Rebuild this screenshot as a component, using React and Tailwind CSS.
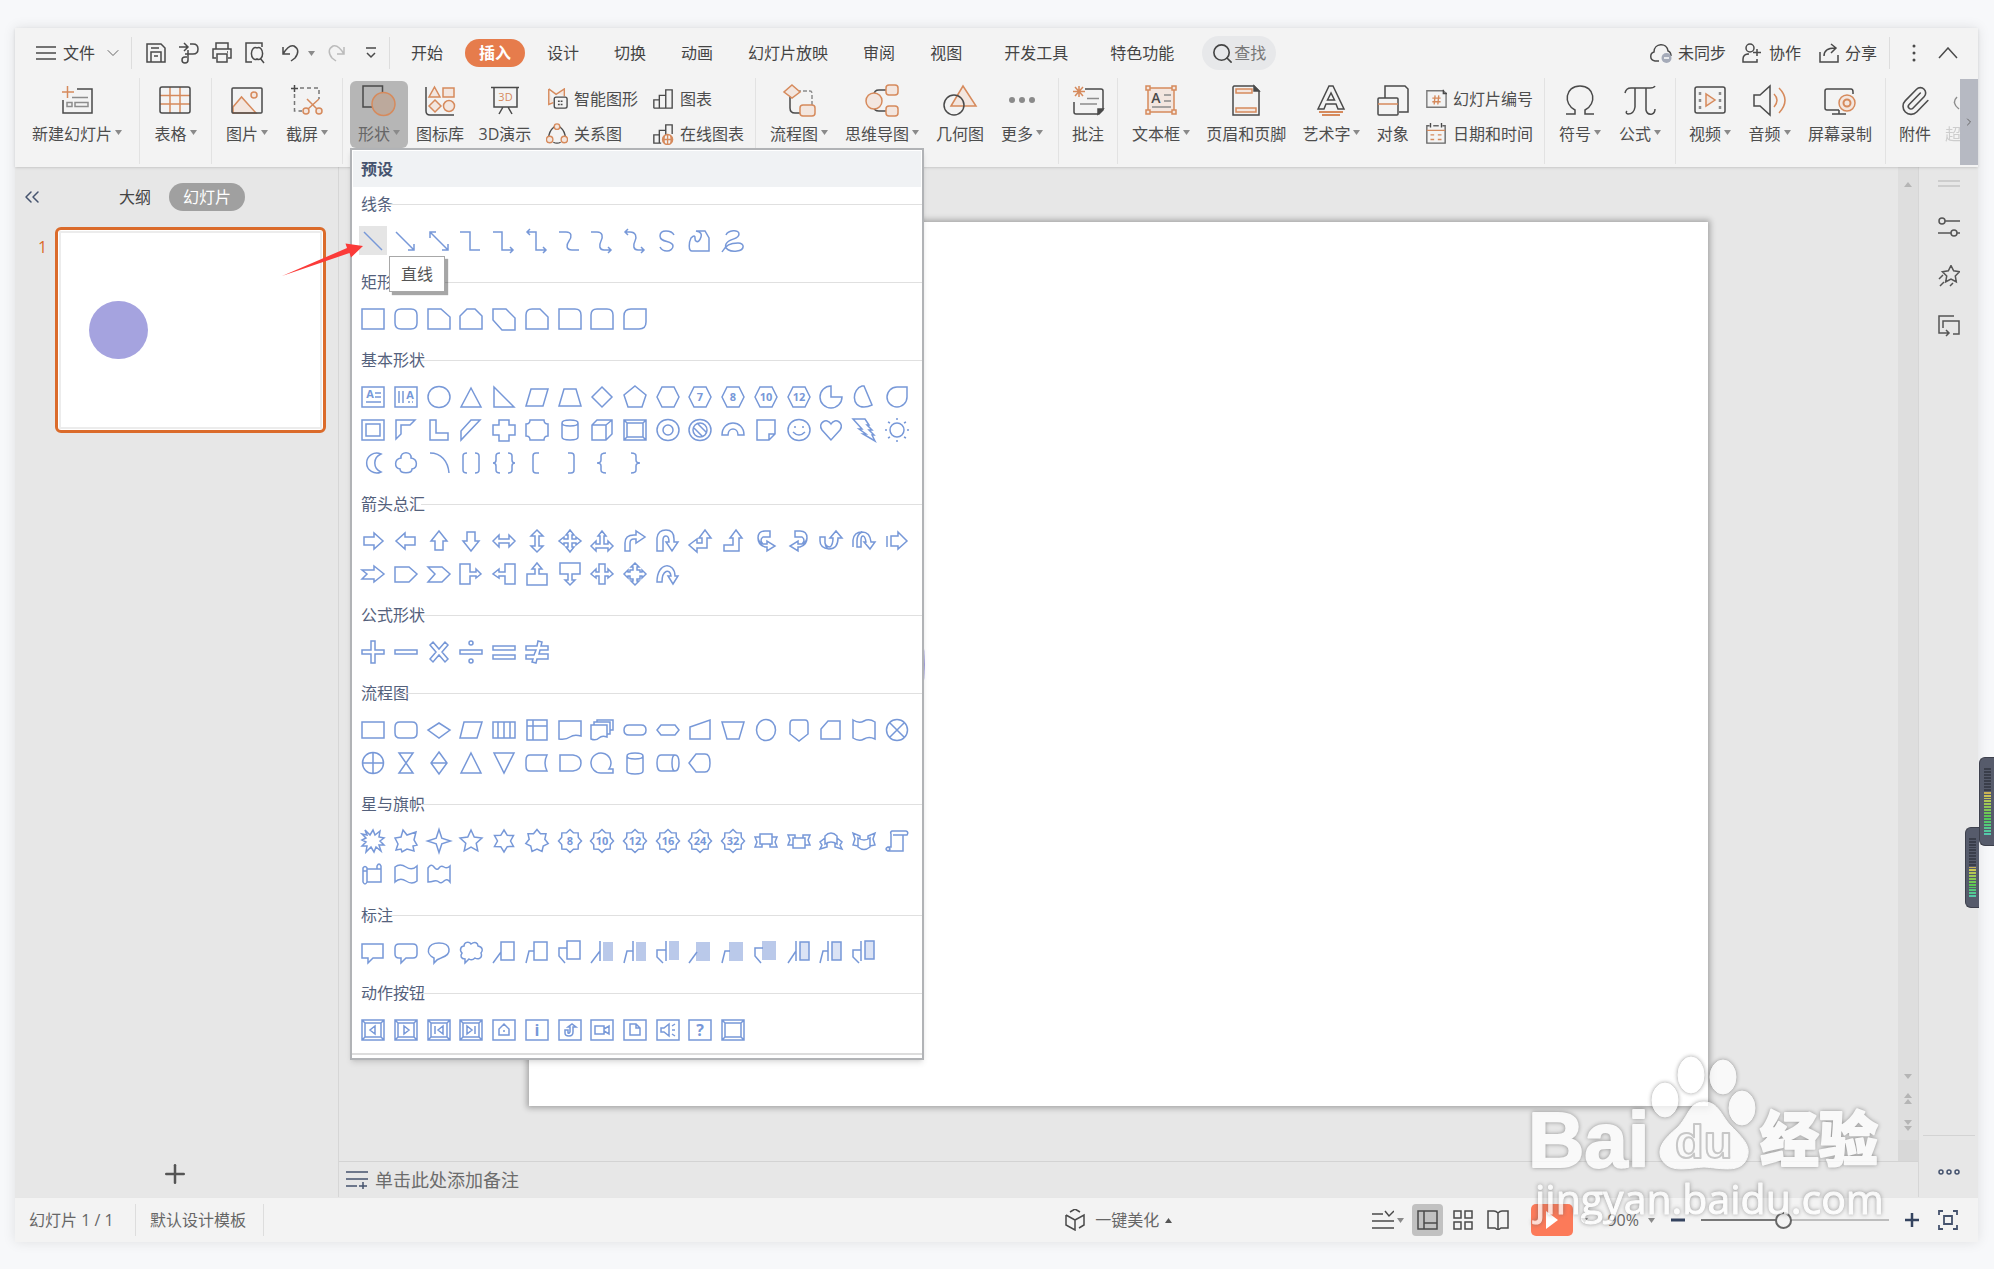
import React, { useState } from 'react';
import { ChevronDown, ChevronRight, ChevronsLeft, Paperclip, Plus, Search } from 'lucide-react';

const DARK = '#4a4a4a';
const ORANGE = '#d68a5c';
const TINT = '#f3e6df';
const BLUE = '#7798d8';

// Polygon helpers for the star shapes
const star = (n, outer, inner, cx = 12, cy = 12) => {
    const pts = [];
    for (let i = 0; i < n * 2; i++) {
        const r = i % 2 === 0 ? outer : inner;
        const a = (Math.PI * i) / n - Math.PI / 2;
        pts.push(`${(cx + r * Math.cos(a)).toFixed(2)} ${(cy + r * Math.sin(a)).toFixed(2)}`);
    }
    return `M${pts.join('L')}z`;
};

const circle = (cx, cy, rx, ry = rx) =>
    `M${cx - rx} ${cy}a${rx} ${ry} 0 1 0 ${rx * 2} 0a${rx} ${ry} 0 1 0 ${-rx * 2} 0z`;

const HEX = 'M6 2H18L23 12 18 22H6L1 12z';
const BOX = 'M1 2H23V22H1z';
const BEVEL = `${BOX}M4 5H20V19H4zM1 2l3 3M23 2l-3 3M1 22l3-3M23 22l-3-3`;
const SEAL = star(8, 11.5, 9);

const shapeGroups = [
    {
        title: '线条',
        shapes: [
            'M3 3L21 21',
            'M2 3L20 21M20 15V21H14',
            'M3 3L21 21M21 15V21H15M3 9V3H9',
            'M1 3H11V21H21',
            'M1 3H10V21H21M18 18l3 3-3 3',
            'M2 3H11V21H21M18 18l3 3-3 3M5 0L2 3l3 3',
            'M1 3h7c6 0 6 5 3 9s-3 9 3 9h7',
            'M1 3h6c6 0 6 5 4 9s-2 9 3 9h7M18 18l3 3-3 3',
            'M2 3h5c6 0 7 5 5 9s-2 9 3 9h6M18 18l3 3-3 3M5 0L2 3l3 3',
            'M18 6C16 2 13 2 10 2 6 2 4 4 4 7c0 7 13 4 13 10 0 3-3 5-6 5-4 0-6-2-7-4',
            'M3 9C1 13 0 22 4 22H21V9L17 2H8C13 3 14 5 13 8s-3 6-5 4c-2-1 0-5-2-5-1 0-2 1-3 2z',
            'M5 6c2-5 13-6 13-1 0 6-10 4-13 10-2 5 4 8 11 7 8-1 8-8 1-8-8 0-12 2-16 9',
        ],
    },
    {
        title: '矩形',
        shapes: [
            BOX,
            'M7 2H17Q23 2 23 8V16Q23 22 17 22H7Q1 22 1 16V8Q1 2 7 2z',
            'M1 2H14L23 10V22H1z',
            'M8 2H16L23 9V22H1V9z',
            'M1 2H14L23 11V23H10L1 13z',
            'M7 2H15L23 10V22H1V8Q1 2 7 2z',
            'M1 2H17Q23 2 23 8V22H1z',
            'M7 2H17Q23 2 23 8V22H1V8Q1 2 7 2z',
            'M8 2H23V15Q23 22 16 22H1V9Q1 2 8 2z',
        ],
    },
    {
        title: '基本形状',
        shapes: [
            { d: `${BOX}M14 8h6M14 12h6M5 17h15`, text: 'A', x: 9, y: 13 },
            { d: `${BOX}M5 6V18M9 6V18M14 17h2M18 17h1`, text: 'A', x: 16, y: 14 },
            circle(12, 12, 11, 10.5),
            'M12 3L22 22H2z',
            'M2 2V22H22z',
            'M6 4H23L18 21H1z',
            'M6 4H18L23 21H1z',
            'M12 2L22 12 12 22 2 12z',
            'M12 1L23 10 19 22H5L1 10z',
            HEX,
            { d: HEX, text: '7' },
            { d: HEX, text: '8' },
            { d: HEX, text: '10' },
            { d: HEX, text: '12' },
            'M12 1A11 11 0 1 0 23 12H12z',
            'M10 1C0 4 -1 22 12 22Q16 22 20 20L12 1z',
            'M22 2V12A10 10 0 1 1 12 2z',
            `${BOX}M5 6H19V18H5z`,
            'M2 2H21L16 7H7V16L2 21z',
            'M3 2H9V15H21V22H3z',
            'M12 2H21L2 22V13z',
            'M7 2H17V7H23V17H17V23H7V17H1V7H7z',
            'M5 2H19Q19 6 23 6V18Q19 18 19 22H5Q5 18 1 18V6Q5 6 5 2z',
            'M4 5Q4 2 12 2T20 5V19Q20 22 12 22T4 19zM4 5Q4 8 12 8T20 5',
            'M7 2H22V16L16 22H2V7zM2 7H16V22M16 7L22 2',
            BEVEL,
            `${circle(12, 12, 11, 10.5)}${circle(12, 12, 5)}`,
            `${circle(12, 12, 11, 10.5)}${circle(12, 12, 7)}M6 10L15 19M9 5L18 14`,
            'M1 17C1 1 23 1 23 17H17C17 9 7 9 7 17z',
            'M3 2H21V16L15 22H3zM21 16H15V22',
            `${circle(12, 12, 11, 10.5)}M6 14Q12 20 18 14M8 8v2M16 8v2`,
            'M12 22L3 12C-2 5 8 -1 12 6 16 -1 26 5 21 12z',
            'M1 1H13L17 7H15L20 12H17L22 17H20L23 23 11 16H14L7 11H10z',
            `${circle(12, 12, 7)}M12 0V2M12 22v2M0 12H2M22 12h2M3 4L5 5M19 19l2 1M3 20l2-1M19 5l2-1`,
            'M20 3A10 10 0 1 0 20 21A11 10 0 0 1 20 3z',
            'M7 7C6 0 18 0 17 7 24 8 24 17 18 18 18 23 6 23 6 18 0 17 0 8 7 7z',
            'M3 2C14 2 21 10 22 22',
            'M8 2Q4 2 4 5V19Q4 22 8 22M16 2q4 0 4 3V19q0 3-4 3',
            'M8 2Q4 2 4 5V9Q4 12 1 12 4 12 4 15V19Q4 22 8 22M16 2q4 0 4 3V9q0 3 3 3-3 0-3 3V19q0 3-4 3',
            'M14 2H11Q8 2 8 5V19Q8 22 11 22H14',
            'M10 2H13Q16 2 16 5V19Q16 22 13 22H10',
            'M16 2Q11 2 11 5V9Q11 12 7 12 11 12 11 15V19Q11 22 16 22',
            'M8 2Q13 2 13 5V9Q13 12 17 12 13 12 13 15V19Q13 22 8 22',
        ],
    },
    {
        title: '箭头总汇',
        shapes: [
            'M3 8H13V4L22 12 13 20V16H3z',
            'M21 8H11V4L2 12 11 20V16H21z',
            'M8 21V12H4L12 2 20 12H16V21z',
            'M8 3V12H4L12 22 20 12H16V3z',
            'M1 12L7 6V10H17V6L23 12 17 18V14H7V18z',
            'M12 1L18 7H14V17H18L12 23 6 17H10V7H6z',
            'M12 1L16 6H14V10H18V8L23 12 18 16V14H14V18H16L12 23 8 18H10V14H6V16L1 12 6 8V10H10V6H8z',
            'M12 2L16 7H14V15H18V12L23 17 18 22V19H6V22L1 17 6 12V15H10V7H8z',
            'M2 22V14Q2 6 11 6H13V2L22 8 13 14V10H11Q7 10 7 14V22z',
            'M1 22V9Q2 1 10 1T18 10V13H22L16 22 10 13H13Q13 7 10 7 7 7 7 11V22z',
            'M17 1L23 9H19V19H9V23L1 16 9 10V14H14V9H11z',
            'M15 1L21 9H18V22H3V16H12V9H9z',
            'M16 2H11Q4 2 4 9T11 18H13V22L21 17 13 12V15H9Q5 11 9 8H16zM4 9Q5 14 9 15',
            'M8 2H13Q20 2 20 9T13 18H11V22L3 17 11 12V15H15Q19 11 15 8H8zM20 9Q19 14 15 15',
            'M1 8H6V14Q7 18 11 18 14 16 14 9H11L17 2 23 9H19Q19 20 10 20 1 19 1 12zM6 14Q7 20 10 20',
            'M1 18V11Q2 3 10 3 18 3 19 13H23L18 20 12 13H14Q13 7 11 7 9 7 9 11V18H5V12Q5 5 10 3',
            'M2 7V18M6 7H13V3L22 12 13 20V17H6z',
            'M1 8H13V4L23 12 13 20V17H1L6 12z',
            'M1 5H15L23 12 15 20H1z',
            'M1 5H15L23 12 15 20H1L8 12z',
            'M1 2H11V10H17V7L22 12 17 16V14H11V22H1z',
            'M23 2H13V10H7V7L1 12 7 16V14H13V22H23z',
            'M2 12H10V7H7L12 1 17 7H14V12H22V23H2z',
            'M2 1H22V12H14V18H17L12 23 7 18H10V12H2z',
            'M9 2H15V10H18V7L23 12 18 16V14H15V22H9V14H6V16L1 12 6 7V10H9z',
            'M12 1L16 5H14V8H17V10H19V8L23 12 19 16V14H17V17H14V19H16L12 23 8 19H10V17H7V14H5V16L1 12 5 8V10H7V8H10V5H8z',
            'M1 20C1 -1 19 0 19 14H22L17 22 12 14H15C14 6 6 8 6 20z',
        ],
    },
    {
        title: '公式形状',
        shapes: [
            'M10 1H14V10H23V14H14V23H10V14H1V10H10z',
            'M1 10H23V14H1z',
            'M6 2L12 9 18 2 21 5 15 12 21 19 18 22 12 15 6 22 3 19 9 12 3 5z',
            `M1 10H23V14H1z${circle(12, 3, 2)}${circle(12, 21, 2)}`,
            'M1 6H23V10H1zM1 15H23V19H1z',
            'M1 6H12L13 1 17 2 16 6H23V10H15L14 14H23V19H12L11 23 7 22 8 19H1V15H9L11 10H1z',
        ],
    },
    {
        title: '流程图',
        shapes: [
            'M1 4H23V20H1z',
            'M6 4H18Q23 4 23 9V15Q23 20 18 20H6Q1 20 1 15V9Q1 4 6 4z',
            'M12 5L23 12 12 20 1 12z',
            'M5 4H23L18 20H1z',
            'M1 4H23V20H1zM6 4V20M18 4V20M12 4V20',
            'M2 2H22V22H2zM2 8H22M8 2V22',
            'M1 3H23V18Q16 16 12 19T1 21z',
            'M1 7H17V19Q12 17 9 20T1 21zM4 7V4H20V16H17M7 4V2H23V12H20',
            'M6 7H18Q23 7 23 12T18 17H6Q1 17 1 12T6 7z',
            'M5 7H19L23 12 19 17H5L1 12z',
            'M2 9L22 2V21H2z',
            'M1 4H23L18 21H6z',
            circle(12, 12, 9.5, 10.5),
            'M6 2H18Q21 2 21 6V16L12 23 3 16V6Q3 2 6 2z',
            'M9 3H21V21H2V11z',
            'M1 2Q7 6 12 3T23 4V21Q17 18 12 21T1 20z',
            `${circle(12, 12, 10.5)}M5 5L19 19M19 5L5 19`,
            `${circle(12, 12, 10.5)}M12 1V23M1 12H23`,
            'M5 2H19L5 22H19z',
            'M12 1L20 12 12 23 4 12zM4 12H20',
            'M12 2L22 22H2z',
            'M2 2H22L12 22z',
            'M5 4H22Q18 12 22 20H5Q1 20 1 15V9Q1 4 5 4z',
            'M2 4H15Q23 5 23 12T15 20H2z',
            'M19 18A10 10 0 1 0 12 22H23V18z',
            'M4 5Q4 2 12 2T20 5V20Q20 23 12 23T4 20zM4 5Q4 8 12 8T20 5',
            'M5 4H19Q23 4 23 12T19 20H5Q1 20 1 12T5 4zM19 4Q16 4 16 12T19 20',
            'M8 3H17Q22 3 22 12T17 21H8L1 12z',
        ],
    },
    {
        title: '星与旗帜',
        shapes: [
            'M4 1L9 6 12 1 14 6 19 2 18 8 23 9 19 12 23 16 18 16 20 22 15 18 13 23 10 18 5 23 6 17 1 17 5 13 1 11 5 9 1 5 6 6z',
            'M9 1L13 6 22 3 20 11 23 16 19 17 20 22 13 20 8 23 7 20 2 21 4 15 1 9 7 8z',
            star(4, 11.5, 4),
            star(5, 11.5, 5.5, 12, 12.5),
            star(6, 11, 6.5),
            star(7, 11.5, 8),
            { d: SEAL, text: '8' },
            { d: SEAL, text: '10' },
            { d: SEAL, text: '12' },
            { d: SEAL, text: '16' },
            { d: SEAL, text: '24' },
            { d: SEAL, text: '32' },
            'M6 5H18V15H6zM6 8H1L3 13 1 18H8V15M18 8H23L21 13 23 18H16V15',
            'M6 9H18V19H6zM6 16H1L3 11 1 6H8V9M18 16H23L21 11 23 6H16V9',
            'M6 7Q12 1 18 7V15Q12 11 6 15zM6 9L1 13 3 16 1 20 8 18V14M18 9L23 13 21 16 23 20 16 18V14',
            'M6 9Q12 13 18 9V18Q12 23 6 18zM6 17L1 16 3 10 1 4 8 7V10M18 17L23 16 21 10 23 4 16 7V10',
            'M7 2H21Q24 3 22 6H18V22H3Q-1 20 3 18H6V5Q5 3 7 2zM8 6H18M3 18Q7 20 3 22',
            'M2 6Q4 3 6 6V20Q4 24 2 20zM6 7H20V20H6M16 7V4Q18 0 20 4V7M2 9H6',
            'M1 5Q6 1 12 5T23 4V19Q18 23 12 19T1 20z',
            'M1 6Q4 1 7 5T12 6 17 5 23 4V20Q20 16 17 19T12 20 7 19 1 20z',
        ],
    },
    {
        title: '标注',
        shapes: [
            'M1 4H22V18H12L7 23V18H1z',
            'M5 4H19Q23 4 23 8V14Q23 18 19 18H12L7 23V18H5Q1 18 1 14V8Q1 4 5 4z',
            'M7 23V18C-2 14 0 3 12 3S26 14 14 18Q10 19 7 23z',
            'M6 19C2 19 1 16 3 13 0 10 2 6 5 6 5 2 10 1 12 4 16 1 19 3 19 6 24 7 24 11 22 13 24 18 19 20 16 18Q13 21 10 19L6 23z',
            'M9 2H22V20H9zM1 23L9 12',
            'M9 2H22V20H9zM1 23L4 11H9',
            'M9 1H22V19H9zM9 8H1V16L7 23',
            { d: 'M10 1V21M1 23L10 11', fill: 'M13 2H23V21H13z' },
            { d: 'M10 1V21M1 23L4 11H10', fill: 'M13 2H23V21H13z' },
            { d: 'M10 1V21M10 10H1V17L7 23', fill: 'M13 1H23V20H13z' },
            { d: 'M1 23L9 12', fill: 'M8 2H22V21H8z' },
            { d: 'M1 23L4 11H9', fill: 'M8 2H22V21H8z' },
            { d: 'M9 8H1V16L7 23', fill: 'M8 1H22V20H8z' },
            { d: 'M9 1V21M1 23L9 11M13 2H22V20H13z', fill: 'M13 2H22V20H13z', pale: true },
            { d: 'M9 1V21M1 23L4 11H9M13 2H22V20H13z', fill: 'M13 2H22V20H13z', pale: true },
            { d: 'M9 1V21M9 10H1V17L7 23M13 1H22V19H13z', fill: 'M13 1H22V19H13z', pale: true },
        ],
    },
    {
        title: '动作按钮',
        shapes: [
            `${BEVEL}M14 8V16L9 12z`,
            `${BEVEL}M10 8V16L15 12z`,
            `${BEVEL}M16 8V16L11 12zM8 8V16`,
            `${BEVEL}M8 8V16L13 12zM16 8V16`,
            `${BOX}M7 17V11L12 6 17 11V17zM12 12V14`,
            { d: BOX, text: 'i', size: 16, y: 18 },
            `${BOX}M7 12V15Q7 18 11 18T15 14V9H18L14 6 10 9H12V14Q11 16 10 15V12z`,
            `${BOX}M5 8H14V16H5zM14 11L19 8V16L14 13`,
            `${BOX}M7 6H13L17 10V17H7zM13 6V10H17`,
            `${BOX}M5 10H8L13 6V18L8 14H5zM16 8l3-2M16 12h3M16 16l3 2`,
            { d: BOX, text: '?', size: 16, y: 18 },
            BEVEL,
        ],
    },
];

const ShapeIcon = ({ shape }) => {
    const s = typeof shape === 'string' ? { d: shape } : shape;
    return (
        <svg width="24" height="24" viewBox="0 0 24 24" fill="none" stroke={BLUE} strokeWidth="1.5" className="overflow-visible">
            {s.fill && <path d={s.fill} fill={s.pale ? '#dbe3f5' : '#bac9ea'} stroke="none" />}
            <path d={s.d} />
            {s.text && (
                <text x={s.x || 12} y={s.y || 16} textAnchor="middle" fontSize={s.size || 11} fontWeight="700" fill={BLUE} stroke="none">
                    {s.text}
                </text>
            )}
        </svg>
    );
};

const ShapeMenu = () => (
    <div className="absolute left-0 top-full z-20 w-[574px] border-2 border-[#b1b3b6] bg-white pb-[3px] text-left shadow-md" role="menu">
        <h2 className="mx-px mt-px flex h-9 items-center bg-[#f0f2f4] px-2 font-bold text-[#45536e]">预设</h2>
        <div className="border-b-2 border-[#dddddd] pt-[5px]">
            {shapeGroups.map((group, gi) => (
                <section key={group.title} className={gi === shapeGroups.length - 1 ? 'pb-[7px]' : 'pb-[13px]'}>
                    <div className="flex h-6 items-center pl-[9px]">
                        <h3 className="text-[#54617c]">{group.title}</h3>
                        <span className="-ml-1 h-px flex-1 bg-[#e0e0e0]" />
                    </div>
                    <div className="grid grid-cols-17 pl-[5px] pr-[9px] pt-2">
                        {group.shapes.map((shape, i) => (
                            <div key={i} className="relative flex h-[33px] items-center justify-center">
                                <button
                                    role="menuitem"
                                    aria-label={`${group.title} ${i + 1}`}
                                    className={`flex h-[29px] w-7 items-center justify-center ${gi === 0 && i === 0 ? 'bg-[#e5e5e5]' : ''}`}
                                >
                                    <ShapeIcon shape={shape} />
                                </button>
                                {gi === 0 && i === 0 && <ShapeTooltip />}
                            </div>
                        ))}
                    </div>
                </section>
            ))}
        </div>
    </div>
);

const ShapeTooltip = () => (
    <>
        <span
            role="tooltip"
            className="absolute left-8 top-8 z-10 flex h-9 w-14 items-center justify-center border border-[#a8a8a8] bg-white text-[#555555] shadow-[3px_3px_1px_rgba(0,0,0,0.35)]"
        >
            直线
        </span>
        <svg width="84" height="36" viewBox="0 0 84 36" className="absolute -left-[76px] top-[18px] z-10">
            <path d="M1 34L66 6 64.5 1.500 82 4 70 15.500 68.500 11z" fill="#fb3b39" />
        </svg>
    </>
);

const Caret = ({ up }) => (
    <svg width="7" height="5" viewBox="0 0 7 5" className="shrink-0">
        <path d={up ? 'M0 5L3.5 0 7 5z' : 'M0 0H7L3.5 5z'} fill={up ? '#555555' : '#8a8a8a'} />
    </svg>
);

const ribbonIcons = {
    newSlide: (
        <>
            <path d="M16 4H31V28H2V15" />
            <path d="M11 12.500H27M6 17.500H11V21.500H6zM14 17.500H27V21.500H14z" stroke="#8c8c8c" />
            <path d="M6.500 1V13M1 7H13" stroke={ORANGE} />
        </>
    ),
    table: (
        <>
            <path d="M11 2V28M21 2V28M1 10.500H31M1 19H31" stroke={ORANGE} />
            <rect x="1" y="2" width="30" height="26" rx="2" />
        </>
    ),
    image: (
        <>
            <path d="M2 22L10.500 12 25 28H2z" fill={TINT} stroke={ORANGE} />
            <circle cx="23" cy="10" r="3" fill={TINT} stroke={ORANGE} />
            <rect x="1" y="3" width="30" height="25" rx="1" />
        </>
    ),
    screenshot: (
        <>
            <path d="M9 3H28V14M3.500 9V26H11" stroke="#777777" strokeDasharray="4 3" />
            <path d="M3.500 0V7M0 3.500H7" />
            <path d="M16 14L26 24M28 14L17 24" stroke={ORANGE} />
            <circle cx="15" cy="26" r="3" fill={TINT} stroke={ORANGE} />
            <circle cx="28" cy="26" r="3" fill={TINT} stroke={ORANGE} />
        </>
    ),
    shapes: (
        <>
            <path d="M0 1H19.500V22H0z" />
            <circle cx="20.500" cy="19" r="11.500" fill="#bca99c" stroke={ORANGE} />
        </>
    ),
    library: (
        <>
            <path d="M2 2V26Q2 30 6 30H30" />
            <path d={`M5 12H16L10.500 2zM19 3H30V12H19zM11 15L17 21 11 27 5 21z${circle(25, 21, 5.5)}`} fill={TINT} stroke={ORANGE} />
        </>
    ),
    demo3d: (
        <>
            <path d="M2 2.500H30M5 3V22H28V3M14 22L10 29M19 22L23 29" />
            <text x="16.500" y="16" textAnchor="middle" fontSize="11" fill={ORANGE} stroke="none">3D</text>
        </>
    ),
    flow: (
        <>
            <path d="M7 10V23Q7 28 12 28H17" />
            <path d="M14 6H27Q29 6 29 9V20" stroke="#8c8c8c" strokeDasharray="4 2" />
            <path d="M9 0L17 7 9 13 1 7z" fill={TINT} stroke={ORANGE} />
            <rect x="17" y="20" width="15" height="11" rx="3" fill={TINT} stroke={ORANGE} />
        </>
    ),
    mindmap: (
        <>
            <path d="M8 10Q8 5 13 5H20M8 22Q8 26 13 26H20" />
            <ellipse cx="8" cy="16" rx="8" ry="8" fill={TINT} stroke={ORANGE} />
            <rect x="20" y="0" width="12" height="10" rx="3" fill={TINT} stroke={ORANGE} />
            <rect x="20" y="21" width="12" height="10" rx="3" fill={TINT} stroke={ORANGE} />
        </>
    ),
    geometry: (
        <>
            <path d="M7 21L19 1 32 21z" fill={TINT} stroke={ORANGE} />
            <circle cx="10" cy="20" r="10" />
        </>
    ),
    more: (
        <>
            <circle cx="6" cy="15" r="3" fill="#8a8a8a" stroke="none" />
            <circle cx="16" cy="15" r="3" fill="#8a8a8a" stroke="none" />
            <circle cx="26" cy="15" r="3" fill="#8a8a8a" stroke="none" />
        </>
    ),
    comment: (
        <>
            <path d="M13 4H29Q31 4 31 6V25L27 29H4Q2 29 2 27V17" />
            <path d="M31 24H26V29z" fill={DARK} />
            <path d="M15 13.500H27M8 19H25" stroke="#8c8c8c" />
            <path d="M7 1V12M1 6.500H13M3 2L11 11M11 2L3 11" stroke={ORANGE} />
        </>
    ),
    textbox: (
        <>
            <path d="M3 3H29V27H3z" fill={TINT} stroke={ORANGE} />
            <path d="M1 1H5V5H1zM27 1H31V5H27zM1 25H5V29H1zM27 25H31V29H27z" fill={TINT} stroke={ORANGE} />
            <path d="M19 10H26M19 16H26M7 22H26" stroke="#8c8c8c" />
            <text x="11" y="18" textAnchor="middle" fontSize="14" fontWeight="600" fill={DARK} stroke="none">A</text>
        </>
    ),
    headerFooter: (
        <>
            <path d="M4 1H24L29 6V30H3V2z" />
            <path d="M24 1V6H29z" fill={DARK} />
            <path d="M6 4H22V8H6zM6 23H26V27H6z" fill={TINT} stroke={ORANGE} />
        </>
    ),
    wordArt: (
        <>
            <path d="M3 24L14 1H18L29 24H23L21 19H11L9 24zM16 8L12.500 15H19.500z" />
            <path d="M4 27H28M7 30H25" stroke={ORANGE} strokeWidth="2" />
        </>
    ),
    object: (
        <>
            <path d="M8 13V1H28L31 4V27H22" />
            <rect x="1" y="13" width="20" height="17" rx="1" fill="#f3f3f3" />
            <path d="M1 19H21" stroke={ORANGE} />
        </>
    ),
    omega: <path d="M2 29H11V25C-1 19 1 1 16 1S33 19 21 25V29H30" />,
    pi: <path d="M1 8Q2 3 7 3H26Q30 3 31 1M11 3V22Q10 29 4 29 1 28 3 26M22 3V25Q23 30 28 29 31 28 31 24" />,
    video: (
        <>
            <rect x="1" y="2" width="30" height="26" rx="2" />
            <path d="M12 9V21L21 15z" fill={TINT} stroke={ORANGE} />
            <path d="M6 7V10M6 14V17M6 21V24M26 7V10M26 14V17M26 21V24" stroke="#8c8c8c" strokeWidth="2.500" />
        </>
    ),
    audio: (
        <>
            <path d="M1 10H7L17 1V30L7 21H1z" />
            <path d="M21 9Q27 15 21 22M26 3Q38 15 26 28" stroke={ORANGE} />
        </>
    ),
    record: (
        <>
            <path d="M15 25H3Q1 25 1 23V6Q1 4 3 4H27Q29 4 29 7V9M15 25V29M8 29H22" />
            <circle cx="23" cy="18" r="8" fill={TINT} stroke={ORANGE} />
            <circle cx="23" cy="18" r="3.500" stroke={ORANGE} strokeWidth="2" />
        </>
    ),
    link: <path d="M18 5Q14 1 10 6M4 12Q-2 18 6 24" />,
};

const smallIcons = {
    smart: (
        <>
            <path d="M3 1L11 7 20 1V9M3 1V18L8 16" fill={TINT} stroke={ORANGE} />
            <rect x="9" y="10" width="14" height="12" rx="2" fill="#f3f3f3" />
            <path d="M13 14.500H19M13 18H19" strokeDasharray="2 1" />
        </>
    ),
    relation: (
        <>
            <path d="M9 4Q3 9 3 16M15 4Q21 9 21 16M8 21Q12 23 16 21" />
            <path d={circle(12, 4, 3) + circle(4, 18, 3.5) + circle(20, 18, 3.5)} fill={TINT} stroke={ORANGE} />
        </>
    ),
    chart: <path d="M2 22V13H8V22M8 22V8H15V22M15 22V2H22V22H2" />,
    onlineChart: (
        <>
            <path d="M10 22H2V13H8V22M8 13V8H15V13M15 13V2H22V12" />
            <path d={`${circle(17, 18, 5.5)}M12 18H22M17 12V24M14 13Q12 18 14 23M20 13Q22 18 20 23`} stroke={ORANGE} />
        </>
    ),
    slideNumber: (
        <>
            <path d="M2 3H20L23 6V21H2z" stroke="#777777" />
            <path d="M20 2V6H24" />
            <path d="M11 8L10 18M15 8L14 18M8 11H17M8 15H17" stroke={ORANGE} />
        </>
    ),
    date: (
        <>
            <path d="M5 3H2V22H22V3H19M9 3H15" stroke="#666666" />
            <path d="M6 0V5M18 0V5" />
            <path d="M2 8H22M6 13H10M14 13H18M6 18H10M14 18H18" stroke={ORANGE} />
        </>
    ),
};

const RibbonButton = ({ icon, label, caret, className = '', children }) => (
    <button className={`flex h-[67px] shrink-0 flex-col items-center pt-1 whitespace-nowrap ${className}`}>
        {children || (
            <svg width="32" height="32" viewBox="0 0 32 32" fill="none" stroke={DARK} strokeWidth="1.500" className="overflow-visible">
                {ribbonIcons[icon]}
            </svg>
        )}
        <span className="mt-[5px] flex h-6 items-center gap-[3px]">
            {label}
            {caret && <span className="pb-1"><Caret /></span>}
        </span>
    </button>
);

const RibbonPair = ({ items, className = '' }) => (
    <div className={`flex shrink-0 flex-col ${className}`}>
        {items.map(([icon, label]) => (
            <button key={label} className="flex h-[35px] items-center gap-[6px] whitespace-nowrap">
                <svg width="22" height="22" viewBox="0 0 24 24" fill="none" stroke={DARK} strokeWidth="1.500">{smallIcons[icon]}</svg>
                {label}
            </button>
        ))}
    </div>
);

const RibbonGroup = ({ className, children }) => (
    <div className={`flex h-[86px] shrink-0 items-start border-r border-[#e2e2e2] pt-[3px] ${className}`}>{children}</div>
);

const Ribbon = () => (
    <div className="flex h-[89px] text-[#4d4d4d]">
        <RibbonGroup className="w-[125px] justify-center">
            <RibbonButton icon="newSlide" label="新建幻灯片" caret />
        </RibbonGroup>
        <RibbonGroup className="w-[72px] justify-center">
            <RibbonButton icon="table" label="表格" caret />
        </RibbonGroup>
        <RibbonGroup className="w-[131px] justify-between px-[14px]">
            <RibbonButton icon="image" label="图片" caret />
            <RibbonButton icon="screenshot" label="截屏" caret />
        </RibbonGroup>
        <RibbonGroup className="w-[413px] pl-[7px]">
            <div className="relative">
                <RibbonButton icon="shapes" label="形状" caret className="w-[58px] rounded-md bg-[#b6b6b6] text-[#666666]" />
                <ShapeMenu />
            </div>
            <RibbonButton icon="library" label="图标库" className="w-16" />
            <RibbonButton icon="demo3d" label="3D演示" className="w-[66px]" />
            <RibbonPair className="ml-2 w-[98px]" items={[['smart', '智能图形'], ['relation', '关系图']]} />
            <RibbonPair className="ml-2" items={[['chart', '图表'], ['onlineChart', '在线图表']]} />
        </RibbonGroup>
        <RibbonGroup className="w-[303px] justify-between pl-[14px] pr-[15px]">
            <RibbonButton icon="flow" label="流程图" caret />
            <RibbonButton icon="mindmap" label="思维导图" caret />
            <RibbonButton icon="geometry" label="几何图" />
            <RibbonButton icon="more" label="更多" caret />
        </RibbonGroup>
        <RibbonGroup className="w-[59px] justify-center">
            <RibbonButton icon="comment" label="批注" />
        </RibbonGroup>
        <RibbonGroup className="w-[427px] justify-between pl-[14px] pr-[11px]">
            <RibbonButton icon="textbox" label="文本框" caret />
            <RibbonButton icon="headerFooter" label="页眉和页脚" />
            <RibbonButton icon="wordArt" label="艺术字" caret />
            <RibbonButton icon="object" label="对象" />
            <RibbonPair items={[['slideNumber', '幻灯片编号'], ['date', '日期和时间']]} />
        </RibbonGroup>
        <RibbonGroup className="w-[131px] justify-between px-[14px]">
            <RibbonButton icon="omega" label="符号" caret />
            <RibbonButton icon="pi" label="公式" caret />
        </RibbonGroup>
        <RibbonGroup className="w-[210px] justify-between px-[13px]">
            <RibbonButton icon="video" label="视频" caret />
            <RibbonButton icon="audio" label="音频" caret />
            <RibbonButton icon="record" label="屏幕录制" />
        </RibbonGroup>
        <div className="flex min-w-0 flex-1 gap-[14px] overflow-hidden pl-[13px] pt-[3px]">
            <RibbonButton label="附件">
                <Paperclip size={32} strokeWidth={1.2} />
            </RibbonButton>
            <RibbonButton icon="link" label="超链接" className="text-[#b5b5b5] opacity-60" />
        </div>
        <button aria-label="向右滚动" className="mt-px flex h-[86px] w-[18px] shrink-0 items-center justify-center bg-[#b6b9c2] text-[#666666]">
            <ChevronRight size={12} />
        </button>
    </div>
);

const TopIcon = ({ d, label, width = 20, color = DARK, className = '' }) => (
    <button aria-label={label} className={className}>
        <svg width={width} height="22" viewBox={`0 0 ${width} 22`} fill="none" stroke={color} strokeWidth="1.500">
            <path d={d} />
        </svg>
    </button>
);

const Divider = ({ className = '' }) => <span className={`h-8 w-px bg-[#dddddd] ${className}`} />;

const MenuBar = () => {
    const [active, setActive] = useState('插入');
    const tabs = ['开始', '插入', '设计', '切换', '动画', '幻灯片放映', '审阅', '视图', '开发工具', '特色功能'];

    return (
        <div className="flex h-[50px] items-center pl-[21px] pr-5 whitespace-nowrap text-[#444444]">
            <button className="flex items-center">
                <svg width="20" height="16" viewBox="0 0 20 16" stroke={DARK} strokeWidth="1.500"><path d="M0 2H20M0 8H20M0 14H20" /></svg>
                <span className="ml-[7px]">文件</span>
                <ChevronDown size={20} strokeWidth={1.2} className="ml-2 text-[#666666]" />
            </button>
            <Divider className="ml-2" />
            <div className="ml-[14px] flex items-center gap-[13px]">
                <TopIcon label="保存" d="M1 2H15L19 6V20H1zM5 20V10H15V20M5 6H13M8 14H12" />
                <TopIcon label="输出为PDF" d="M0 5H8M5 1L9 5 5 9M6 12H14Q19 12 19 7T14 2H11M9 8V18Q9 21 6 21T3 18 6 15H8" />
                <TopIcon label="打印" d="M4 7V1H16V7M4 16H1V7H19V16H16M5 12H15V20H5zM15 10h1" />
                <TopIcon label="打印预览" d="M7 20H1V1H17V5M12 6A4 6 0 1 0 12 17A4 6 0 1 0 12 6M15 16L19 21" />
                <TopIcon label="撤销" width={17} className="ml-1" d="M1 5V12H8M1 12Q7 2 12 4 19 8 13 16L9 19" />
                <span className="-ml-1"><Caret /></span>
                <TopIcon label="恢复" width={17} color="#bbbbbb" d="M16 5V12H9M16 12Q10 2 5 4 -2 8 4 16L8 19" />
                <TopIcon label="更多命令" width={10} className="ml-2" d="M0 6H10M1 11L5 15 9 11" />
            </div>
            <Divider className="ml-[13px]" />
            <nav className="ml-1 flex items-center gap-px">
                {tabs.map((tab) => (
                    <button
                        key={tab}
                        onClick={() => setActive(tab)}
                        className={
                            tab === active
                                ? 'mx-1 flex h-7 items-center rounded-full bg-[#e67c4c] px-[14px] font-bold text-white'
                                : `px-[17px] ${tab === '开发工具' || tab === '特色功能' ? 'ml-[7px]' : ''}`
                        }
                    >
                        {tab}
                    </button>
                ))}
            </nav>
            <label className="ml-[11px] flex h-[34px] w-[74px] items-center rounded-full bg-[#e7e8ea] pl-[9px]">
                <Search size={23} strokeWidth={1.7} className="shrink-0" />
                <input aria-label="查找" placeholder="查找" className="w-9 bg-transparent outline-none placeholder:text-[#777777]" />
            </label>
            <div className="ml-auto flex items-center">
                <button className="flex items-center gap-[6px]">
                    <svg width="22" height="20" viewBox="0 0 22 20" fill="none" stroke={DARK} strokeWidth="1.500">
                        <path d="M9 18H5C-1 17 0 10 4 9 4 0 17 -1 18 8Q21 9 21 13" />
                        <circle cx="16.500" cy="15" r="5" fill="#a5abb9" stroke="none" />
                        <path d="M14 15H19" stroke="#ffffff" />
                    </svg>
                    未同步
                </button>
                <button className="ml-4 flex items-center gap-2">
                    <svg width="19" height="20" viewBox="0 0 19 20" fill="none" stroke={DARK} strokeWidth="1.500">
                        <path d={`${circle(8, 5, 4)}M5 11H7Q1 11 1 16V19H15V16M15 6V13M11 9.500H19`} />
                    </svg>
                    协作
                </button>
                <button className="ml-[18px] flex items-center gap-[6px]">
                    <svg width="20" height="20" viewBox="0 0 20 20" fill="none" stroke={DARK} strokeWidth="1.500">
                        <path d="M1 9V19H19V12M5 13Q5 5 16 5M12 1L17 5 12 10" />
                    </svg>
                    分享
                </button>
                <Divider className="ml-3" />
                <button aria-label="更多" className="ml-[22px]">
                    <svg width="4" height="18" viewBox="0 0 4 18" fill={DARK}>
                        <circle cx="2" cy="2" r="1.500" /><circle cx="2" cy="9" r="1.500" /><circle cx="2" cy="16" r="1.500" />
                    </svg>
                </button>
                <button aria-label="收起功能区" className="ml-[22px]">
                    <svg width="20" height="12" viewBox="0 0 20 12" fill="none" stroke={DARK} strokeWidth="1.500"><path d="M1 11L10 1 19 11" /></svg>
                </button>
            </div>
        </div>
    );
};

// The purple circle drawn on the slide, shared by thumbnail and canvas
const SlideContent = () => (
    <span className="absolute left-[11%] top-[35%] aspect-square w-[22.6%] rounded-full bg-[#a5a3df]" />
);

const SlidePanel = () => (
    <aside className="flex w-[324px] shrink-0 flex-col border-r border-[#d6d6d6]">
        <div className="mt-4 flex h-7 items-center">
            <button aria-label="折叠" className="ml-[5px] text-[#45536e]"><ChevronsLeft size={24} strokeWidth={1.5} /></button>
            <button className="ml-[75px] text-[#444444]">大纲</button>
            <button className="ml-[18px] flex h-7 w-[76px] items-center justify-center rounded-full bg-[#a0a0a0] text-white">幻灯片</button>
        </div>
        <div className="mt-4 flex">
            <span className="mt-2 w-10 shrink-0 pl-[23px] text-[#db6b2b]">1</span>
            <button aria-label="幻灯片 1" className="mr-3 h-[206px] flex-1 rounded-md border-[3px] border-[#db6b2b] bg-white p-px">
                <span className="relative block h-full border-2 border-[#ececec] bg-white"><SlideContent /></span>
            </button>
        </div>
        <button aria-label="新建" className="mt-auto mb-2 self-center pr-1 text-[#555555]"><Plus size={30} strokeWidth={2} /></button>
    </aside>
);

const Triangles = ({ d, height }) => (
    <svg width="8" height={height} viewBox={`0 0 8 ${height}`} fill="#b5b5b5"><path d={d} /></svg>
);

const Scrollbar = () => (
    <div className="flex w-5 shrink-0 flex-col items-center bg-[#dedede] pt-[15px]">
        <Triangles height={5} d="M0 5L4 0 8 5z" />
        <div className="flex-1" />
        <Triangles height={5} d="M0 0H8L4 5z" />
        <div className="h-[14px]" />
        <Triangles height={11} d="M0 5L4 0 8 5zM0 11L4 6 8 11z" />
        <div className="h-4" />
        <Triangles height={11} d="M0 0H8L4 5zM0 6H8L4 11z" />
        <div className="mt-[9px] h-[21px] w-full bg-[#d8d8d8]" />
    </div>
);

const Canvas = () => (
    <main className="flex min-w-0 flex-1 flex-col">
        <div className="flex min-h-0 flex-1">
            <div className="flex min-w-0 flex-1 px-[190px] py-[55px]">
                <div className="relative flex-1 bg-white shadow-[0_0_6px_2px_rgba(0,0,0,0.3)]"><SlideContent /></div>
            </div>
            <Scrollbar />
        </div>
        <label className="flex h-9 items-center border-t border-[#d3d3d3] pl-[7px]">
            <svg width="22" height="20" viewBox="0 0 22 20" fill="none" stroke="#45536e" strokeWidth="1.500">
                <path d="M0 2H22M0 9H22M0 16H11M17 12V19M13 16H21" />
            </svg>
            <input aria-label="备注" placeholder="单击此处添加备注" className="ml-[7px] flex-1 bg-transparent text-lg outline-none placeholder:text-[#6c6c6c]" />
        </label>
    </main>
);

const SideTools = () => (
    <aside className="flex w-[60px] shrink-0 flex-col items-center border-l border-[#d6d6d6]">
        <svg width="22" height="8" viewBox="0 0 22 8" stroke="#c5c5c5" strokeWidth="1.500" className="mt-[13px]"><path d="M0 1H22M0 6H22" /></svg>
        <button aria-label="属性" className="mt-[29px]">
            <svg width="22" height="20" viewBox="0 0 22 20" fill="none" stroke="#555555" strokeWidth="1.500">
                <path d={`${circle(4, 4, 3)}M7 4H22${circle(16, 16, 3)}M0 16H13M19 16H22`} />
            </svg>
        </button>
        <button aria-label="动画" className="mt-7">
            <svg width="22" height="22" viewBox="0 0 22 22" fill="none" stroke="#555555" strokeWidth="1.500">
                <path d={`${star(5, 9, 4.5, 13, 9.5)}M5 10L1 14M6 17L2 21M15 18L12 21`} />
            </svg>
        </button>
        <button aria-label="切换" className="mt-7">
            <svg width="22" height="22" viewBox="0 0 22 22" fill="none" stroke="#555555" strokeWidth="1.500">
                <path d="M16 1H1V18H11M8 15L11 18 8 21M5 13V6H21V19H15" />
            </svg>
        </button>
        <span className="mt-auto h-px w-[52px] bg-[#d3d3d3]" />
        <button aria-label="更多工具" className="mb-[21px] mt-8">
            <svg width="22" height="8" viewBox="0 0 22 8" fill="none" stroke="#45536e" strokeWidth="1.500">
                <path d={circle(3, 4, 2) + circle(11, 4, 2) + circle(19, 4, 2)} />
            </svg>
        </button>
    </aside>
);

const StatusBar = () => (
    <footer className="flex h-[45px] shrink-0 items-center border-t border-[#e6e6e6] bg-[#f3f3f3] pl-[14px] pr-5 whitespace-nowrap text-[#666666]">
        <span className="w-[90px]">幻灯片 1 / 1</span>
        <Divider className="ml-4" />
        <span className="ml-[14px] w-[98px]">默认设计模板</span>
        <Divider className="ml-[15px]" />
        <div className="flex-[4]" />
        <button className="flex items-center">
            <svg width="20" height="22" viewBox="0 0 20 22" fill="none" stroke={DARK} strokeWidth="1.500">
                <path d="M5 3L10 0 15 3M1 6V16L10 21V11L1 6M10 11L19 6V13M19 13V16L14 19" />
            </svg>
            <span className="ml-[10px] mr-[6px]">一键美化</span>
            <Caret up />
        </button>
        <div className="flex-1" />
        <div className="flex items-center">
            <button aria-label="备注选项" className="flex items-center gap-[3px]">
                <svg width="22" height="20" viewBox="0 0 22 20" fill="none" stroke={DARK} strokeWidth="1.500"><path d="M0 4H11M13 1L17 6 22 1M0 11H22M0 18H22" /></svg>
                <Caret />
            </button>
            <button aria-label="普通视图" className="ml-2 flex h-8 w-[31px] items-center justify-center rounded bg-[#c1c1c1]">
                <svg width="21" height="20" viewBox="0 0 21 20" fill="none" stroke={DARK} strokeWidth="1.500"><path d="M1 1H20V19H1zM7 1V19M7 13H20" /></svg>
            </button>
            <button aria-label="幻灯片浏览" className="ml-[10px]">
                <svg width="20" height="20" viewBox="0 0 20 20" fill="none" stroke={DARK} strokeWidth="1.500"><path d="M1 1H8V8H1zM12 1H19V8H12zM1 12H8V19H1zM12 12H19V19H12z" /></svg>
            </button>
            <button aria-label="阅读视图" className="ml-[14px]">
                <svg width="22" height="20" viewBox="0 0 22 20" fill="none" stroke={DARK} strokeWidth="1.500"><path d="M11 3Q9 1 7 1H1V18H8L11 20 14 18H21V1H15Q13 1 11 3zM11 3V19" /></svg>
            </button>
            <button aria-label="放映" className="ml-[22px] flex h-8 w-[42px] items-center justify-center rounded-[5px] bg-[#fc7a59]">
                <svg width="12" height="18" viewBox="0 0 12 18" fill="#ffffff"><path d="M0 0L12 9 0 18z" /></svg>
            </button>
            <span className="ml-2"><Caret /></span>
            <button className="ml-[19px] flex items-center gap-[9px]">90%<Caret /></button>
            <button aria-label="缩小" className="ml-4">
                <svg width="14" height="14" viewBox="0 0 14 14" stroke="#34435f" strokeWidth="3"><path d="M0 7H14" /></svg>
            </button>
            <input
                type="range"
                aria-label="缩放"
                defaultValue="43"
                className="ml-4 h-[2px] w-[188px] appearance-none bg-linear-to-r from-[#777777] from-45% to-[#bdbdbd] to-45% [&::-webkit-slider-thumb]:size-[17px] [&::-webkit-slider-thumb]:appearance-none [&::-webkit-slider-thumb]:rounded-full [&::-webkit-slider-thumb]:border-2 [&::-webkit-slider-thumb]:border-[#666666] [&::-webkit-slider-thumb]:bg-[#f3f3f3]"
            />
            <button aria-label="放大" className="ml-4">
                <svg width="14" height="14" viewBox="0 0 14 14" stroke="#34435f" strokeWidth="2.500"><path d="M0 7H14M7 0V14" /></svg>
            </button>
            <button aria-label="适应窗口" className="ml-[19px]">
                <svg width="20" height="20" viewBox="0 0 20 20" fill="none" stroke="#45536e" strokeWidth="1.800"><path d="M1 5V1H5M15 1H19V5M19 15V19H15M5 19H1V15M6 6H14V14H6z" /></svg>
            </button>
        </div>
    </footer>
);

const LevelMeter = ({ dim, lit, className }) => (
    <div className={`absolute flex justify-center overflow-hidden rounded-l-md border border-r-0 border-[#3d404c] bg-[#565b6b] py-[10px] ${className}`}>
        <div className="flex w-[7px] flex-col gap-px">
            {Array.from({ length: dim }, (_, i) => <span key={i} className="h-[2px] bg-[#3a3e4a]" />)}
            {Array.from({ length: lit }, (_, i) => (
                <span key={`l${i}`} className="h-[2px]" style={{ backgroundColor: `hsl(${48 + (i / lit) * 125} 52% 56%)` }} />
            ))}
        </div>
    </div>
);

const Watermark = () => (
    <svg width="370" height="190" viewBox="0 0 370 190" className="pointer-events-none absolute bottom-[29px] right-[99px] z-30 opacity-75 drop-shadow-[0_0_2px_rgba(90,90,90,0.8)]">
        <g fill="#ffffff" stroke="#ffffff" strokeLinejoin="round">
            <text x="3" y="117" fontSize="78" fontWeight="700" fontFamily="Liberation Sans, sans-serif" strokeWidth="2">Bai</text>
            <path d="M179 52C194 52 196 66 206 76 220 90 226 97 222 108 216 124 196 118 179 117 162 118 144 124 136 108 132 97 140 88 152 78 164 66 164 52 179 52z" />
            <ellipse cx="140" cy="50" rx="13" ry="17" />
            <ellipse cx="166" cy="25" rx="13" ry="18" />
            <ellipse cx="198" cy="27" rx="13" ry="17" />
            <ellipse cx="217" cy="58" rx="13" ry="17" />
            <text x="150" y="108" fontSize="47" fontWeight="700" fontFamily="Liberation Sans, sans-serif" stroke="#bdbdbd" strokeWidth="2">du</text>
            <text x="235" y="111" fontSize="59" fontWeight="900" fontFamily="Noto Sans CJK SC, sans-serif" strokeWidth="2">经验</text>
            <text x="10" y="164" fontSize="41" fontFamily="Open Sans, sans-serif" strokeWidth="1">jingyan.baidu.com</text>
        </g>
    </svg>
);

const App = () => (
    <div className="relative flex h-screen min-h-[1120px] flex-col overflow-hidden bg-[#f7f8fa] pb-[27px] pl-[15px] pr-4 pt-7 font-['Open_Sans','Noto_Sans_CJK_SC',sans-serif] text-base leading-6">
        <div className="flex min-h-0 flex-1 flex-col bg-[#e7e7e7] shadow-[0_0_12px_rgba(0,0,0,0.1)]">
            <header className="relative z-10 shrink-0 bg-[#f3f3f3] shadow-sm">
                <MenuBar />
                <Ribbon />
            </header>
            <div className="flex min-h-0 flex-1">
                <SlidePanel />
                <Canvas />
                <SideTools />
            </div>
            <StatusBar />
        </div>
        <LevelMeter dim={8} lit={15} className="right-0 top-[757px] z-20 h-[89px] w-[15px]" />
        <LevelMeter dim={10} lit={11} className="right-[15px] top-[827px] z-20 h-[81px] w-[14px]" />
        <Watermark />
    </div>
);

export default App;
